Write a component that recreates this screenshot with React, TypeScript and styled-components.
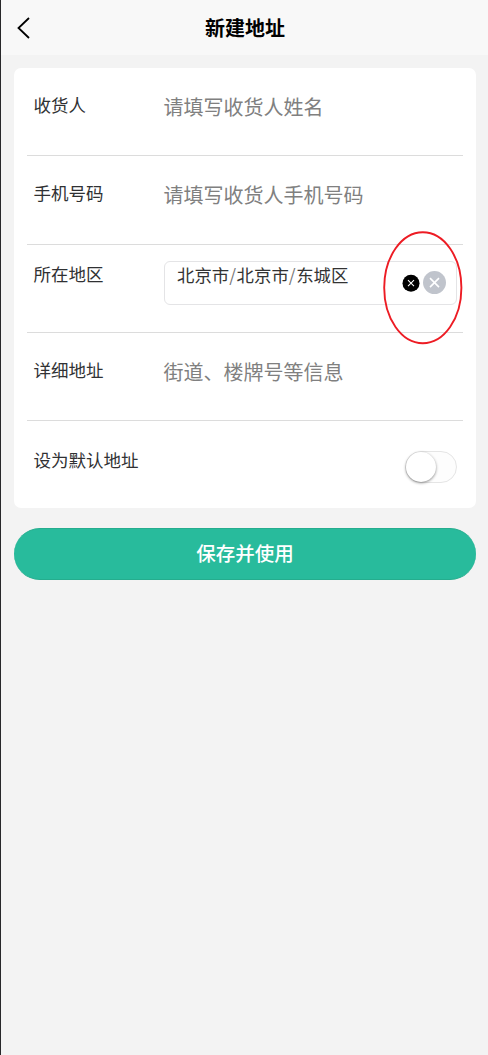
import React from "react";
import styled, { createGlobalStyle } from "styled-components";

const GlobalStyle = createGlobalStyle`
  * { box-sizing: border-box; }
  body {
    margin: 0;
    background: #f3f3f3;
    font-family: "Noto Sans CJK SC", "Noto Sans", sans-serif;
  }
`;

const Page = styled.div`
  position: relative;
  min-height: 1055px;
  border-left: 1px solid #28282a;
  background: #f3f3f3;
`;

const Header = styled.header`
  display: grid;
  grid-template-columns: 60px 1fr 60px;
  align-items: center;
  height: 55px;
  background: #f8f8f8;
`;

const BackIcon = styled.svg`
  display: block;
  width: 14px;
  height: 22px;
  margin-left: 16px;
`;

const Title = styled.h1`
  margin: 0;
  padding-left: 1px;
  text-align: center;
  font-size: 20px;
  line-height: 30px;
  font-weight: 700;
  color: #000;
`;

const Card = styled.section`
  margin: 13px 12px 0 13px;
  padding: 0 13px;
  height: 440px;
  border-radius: 7px;
  background: #fff;
`;

const Row = styled.div<{ $height?: number; $top?: number }>`
  display: flex;
  align-items: flex-start;
  height: ${(p) => p.$height ?? 88}px;
  padding: ${(p) => p.$top ?? 24}px 6px 0 6.6px;
  border-bottom: 1px solid #dcdcdc;

  &:last-child {
    border-bottom: 0;
  }
`;

const Label = styled.label`
  flex: 0 0 130px;
  font-size: 17.5px;
  line-height: 26px;
  color: #303133;
  white-space: nowrap;
`;

const Placeholder = styled.div`
  padding-top: 1px;
  font-size: 20px;
  line-height: 28px;
  color: #808080;
  white-space: nowrap;
`;

const RegionBox = styled.div`
  display: flex;
  flex: 0 0 293px;
  height: 44px;
  margin-left: 0.4px;
  padding-left: 12px;
  border: 1px solid #e4e4e6;
  border-radius: 6px;
`;

const RegionValue = styled.span`
  flex: 1;
  font-size: 17.4px;
  line-height: 26px;
  color: #333;
`;

const Slash = styled.span`
  margin-right: 0.6px;
  color: #777;
`;

const ClearIcons = styled.svg`
  display: block;
  width: 46px;
  height: 26px;
  margin: 8px 9px 0 0;
`;

const SwitchTrack = styled.div`
  width: 52px;
  height: 32px;
  margin: 4px 0 0 auto;
  border: 1px solid #e5e5e5;
  border-radius: 16px;
  background: #fdfdfd;
`;

const SwitchThumb = styled.div`
  width: 30px;
  height: 30px;
  border-radius: 50%;
  background: #fff;
  box-shadow: 0 1px 3px rgba(0, 0, 0, 0.45);
`;

const SaveButton = styled.button`
  display: block;
  width: 462px;
  height: 52px;
  margin: 20px 0 0 13px;
  padding: 0 0 2px;
  border: 1px solid #25ad8e;
  border-width: 1px 0;
  border-radius: 26px;
  background: #28bb9c;
  color: #fff;
  font-family: inherit;
  font-size: 19.5px;
  font-weight: 500;
  line-height: 48px;
`;

const Highlight = styled.svg`
  position: absolute;
  left: 382px;
  top: 231px;
  width: 80px;
  height: 114px;
  pointer-events: none;
`;

export default function App() {
  return (
    <>
      <GlobalStyle />
      <Page>
        <Header>
          <BackIcon viewBox="0 0 14 22" fill="none" stroke="#000" strokeWidth="1.8">
            <path d="M12 1 L1.5 11 L12 21" />
          </BackIcon>
          <Title>新建地址</Title>
        </Header>
        <Card>
          <Row>
            <Label>收货人</Label>
            <Placeholder>请填写收货人姓名</Placeholder>
          </Row>
          <Row $height={89}>
            <Label>手机号码</Label>
            <Placeholder>请填写收货人手机号码</Placeholder>
          </Row>
          <Row $top={16}>
            <Label>所在地区</Label>
            <RegionBox>
              <RegionValue>
                北京市<Slash>/</Slash>北京市<Slash>/</Slash>东城区
              </RegionValue>
              <ClearIcons viewBox="0 0 46 26" fill="none">
                <circle cx="10" cy="13.2" r="8.5" fill="#000" />
                <path d="M7 10.2 L13 16.2 M13 10.2 L7 16.2" stroke="#fff" strokeWidth="1.05" />
                <circle cx="33.5" cy="12.6" r="11.5" fill="#c0c4cc" />
                <path d="M29 8.1 L38 17.1 M38 8.1 L29 17.1" stroke="#fff" strokeWidth="1.6" />
              </ClearIcons>
            </RegionBox>
          </Row>
          <Row>
            <Label>详细地址</Label>
            <Placeholder>街道、楼牌号等信息</Placeholder>
          </Row>
          <Row $height={87} $top={26}>
            <Label as="span">设为默认地址</Label>
            <SwitchTrack role="switch" aria-checked="false">
              <SwitchThumb />
            </SwitchTrack>
          </Row>
        </Card>
        <SaveButton>保存并使用</SaveButton>
        <Highlight viewBox="0 0 80 114" fill="none">
          <ellipse cx="39.8" cy="56.8" rx="38.6" ry="55.5" stroke="#ed1c24" strokeWidth="1.9" />
        </Highlight>
      </Page>
    </>
  );
}
